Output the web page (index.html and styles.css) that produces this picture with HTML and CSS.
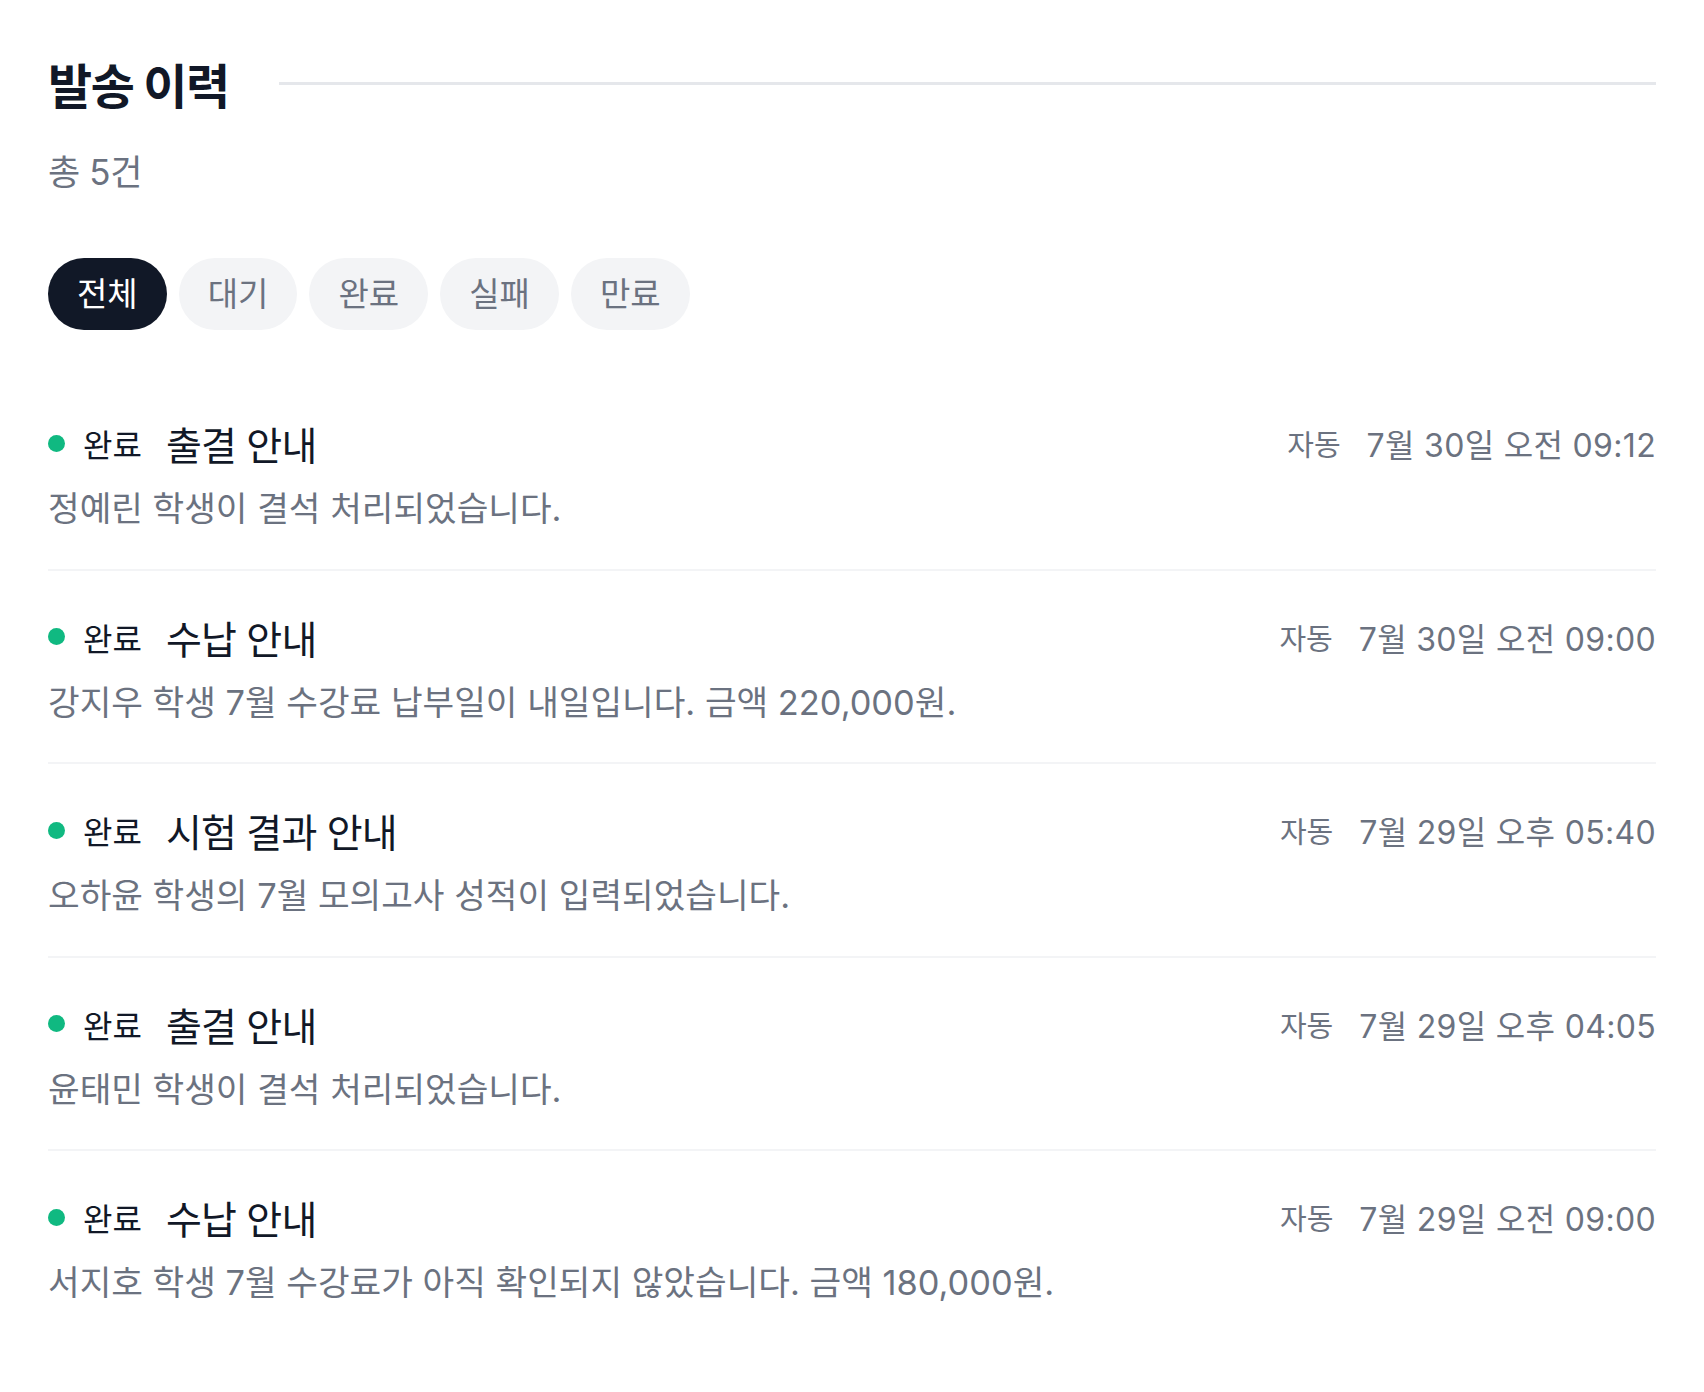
FILE: index.html
```html
<!DOCTYPE html>
<html lang="ko">
<head>
<meta charset="utf-8">
<title>발송 이력</title>
<link rel="stylesheet" href="styles.css">
</head>
<body>
<main class="page">
  <header class="head">
    <h1 class="head-title">발송 이력</h1>
    <div class="head-rule"></div>
  </header>
  <p class="count">총 5건</p>
  <nav class="chips">
    <button class="chip chip-active">전체</button>
    <button class="chip">대기</button>
    <button class="chip">완료</button>
    <button class="chip">실패</button>
    <button class="chip">만료</button>
  </nav>
  <ul class="list">
    <li class="item">
      <div class="item-top">
        <div class="item-left">
          <span class="dot"></span>
          <span class="status">완료</span>
          <span class="item-title">출결 안내</span>
        </div>
        <div class="item-meta">
          <span class="meta-type">자동</span>
          <span class="meta-time">7월 30일 오전 09:12</span>
        </div>
      </div>
      <p class="item-desc">정예린 학생이 결석 처리되었습니다.</p>
    </li>
    <li class="item">
      <div class="item-top">
        <div class="item-left">
          <span class="dot"></span>
          <span class="status">완료</span>
          <span class="item-title">수납 안내</span>
        </div>
        <div class="item-meta">
          <span class="meta-type">자동</span>
          <span class="meta-time">7월 30일 오전 09:00</span>
        </div>
      </div>
      <p class="item-desc">강지우 학생 7월 수강료 납부일이 내일입니다. 금액 220,000원.</p>
    </li>
    <li class="item">
      <div class="item-top">
        <div class="item-left">
          <span class="dot"></span>
          <span class="status">완료</span>
          <span class="item-title">시험 결과 안내</span>
        </div>
        <div class="item-meta">
          <span class="meta-type">자동</span>
          <span class="meta-time">7월 29일 오후 05:40</span>
        </div>
      </div>
      <p class="item-desc">오하윤 학생의 7월 모의고사 성적이 입력되었습니다.</p>
    </li>
    <li class="item">
      <div class="item-top">
        <div class="item-left">
          <span class="dot"></span>
          <span class="status">완료</span>
          <span class="item-title">출결 안내</span>
        </div>
        <div class="item-meta">
          <span class="meta-type">자동</span>
          <span class="meta-time">7월 29일 오후 04:05</span>
        </div>
      </div>
      <p class="item-desc">윤태민 학생이 결석 처리되었습니다.</p>
    </li>
    <li class="item">
      <div class="item-top">
        <div class="item-left">
          <span class="dot"></span>
          <span class="status">완료</span>
          <span class="item-title">수납 안내</span>
        </div>
        <div class="item-meta">
          <span class="meta-type">자동</span>
          <span class="meta-time">7월 29일 오전 09:00</span>
        </div>
      </div>
      <p class="item-desc">서지호 학생 7월 수강료가 아직 확인되지 않았습니다. 금액 180,000원.</p>
    </li>
  </ul>
</main>
</body>
</html>
```
FILE: styles.css
```css
* { box-sizing: border-box; }
html, body { margin: 0; padding: 0; background: #ffffff; }
body {
  font-family: Inter, "Noto Sans CJK KR", sans-serif;
  color: #111827;
}
.page {
  padding: 56px 48px 48px;
}
.head {
  display: flex;
  align-items: center;
  gap: 50px;
}
.head-title {
  margin: 0;
  font-size: 48px;
  font-weight: 700;
  line-height: 62px;
  letter-spacing: -0.03em;
  color: #111827;
}
.head-rule {
  flex: 1;
  height: 3px;
  background: #e5e7eb;
  margin-top: -8px;
}
.count {
  margin: 30px 0 0;
  font-size: 35px;
  line-height: 48px;
  color: #6b7280;
  letter-spacing: -0.01em;
}
.chips {
  display: flex;
  gap: 12px;
  margin-top: 62px;
}
.chip {
  height: 72px;
  padding: 0 29px;
  border: none;
  border-radius: 36px;
  background: #f3f4f6;
  color: #6b7280;
  font-family: inherit;
  font-size: 33px;
  line-height: 72px;
}
.chip-active {
  background: #111827;
  color: #ffffff;
}
.list {
  list-style: none;
  margin: 47px 0 0;
  padding: 0;
}
.item {
  padding: 41px 0 35.5px;
  border-bottom: 2px solid #f3f4f6;
}
.item:last-child { border-bottom: none; }
.item-top {
  display: flex;
  align-items: center;
  justify-content: space-between;
  height: 50px;
}
.item-left {
  display: flex;
  align-items: center;
}
.dot {
  width: 17px;
  height: 17px;
  border-radius: 50%;
  background: #10b981;
  margin-right: 18px;
}
.status {
  font-size: 32px;
  color: #111827;
  margin-right: 24px;
}
.item-title {
  font-size: 39px;
  font-weight: 400;
  letter-spacing: -0.02em;
  color: #111827;
}
.item-meta {
  display: flex;
  align-items: center;
  gap: 26px;
  color: #6b7280;
}
.meta-type { font-size: 29px; }
.meta-time {
  font-size: 32px;
  letter-spacing: 0.01em;
}
.item-desc {
  margin: 17px 0 0;
  font-size: 34.4px;
  line-height: 48px;
  color: #6b7280;
}
```
